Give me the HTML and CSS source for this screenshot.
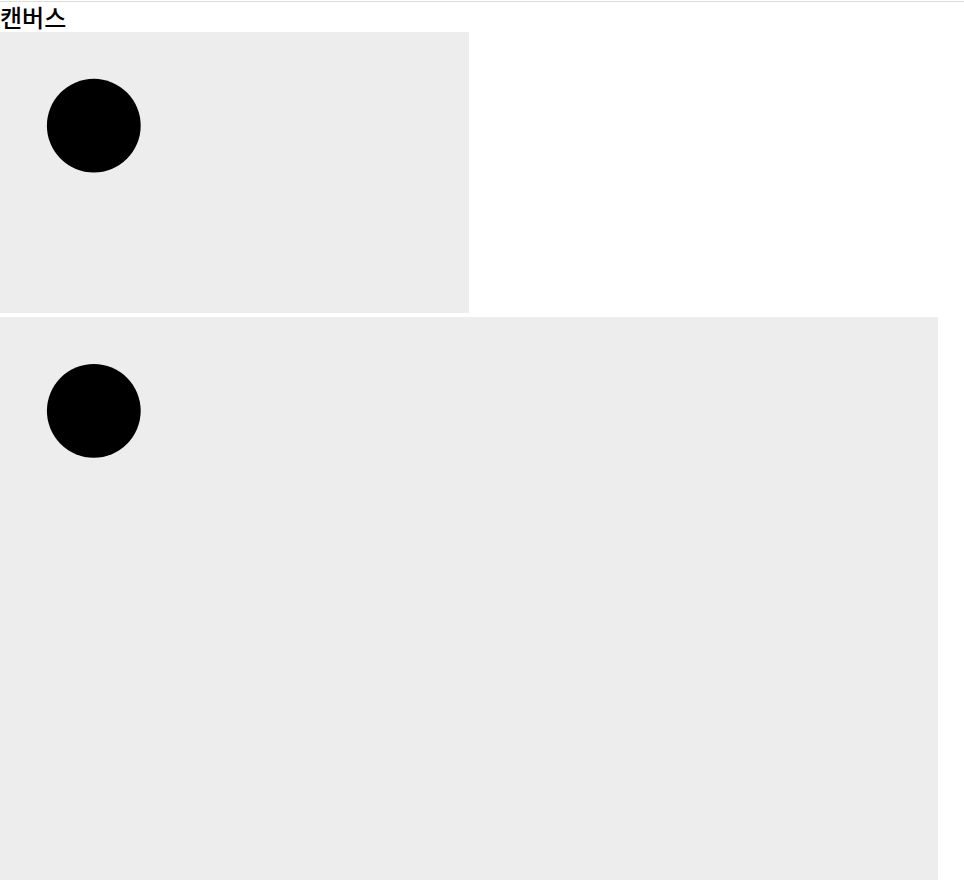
FILE: index.html
```html
<!DOCTYPE html>
<html lang="ko">
<head>
<meta charset="utf-8">
<title>캔버스</title>
<link rel="stylesheet" href="styles.css">
</head>
<body>
<div class="topline"></div>
<h1 class="title">캔버스</h1>
<svg class="canvas small" width="469" height="281" viewBox="0 0 500 300" preserveAspectRatio="none">
  <circle cx="100" cy="100" r="50" fill="#000"/>
</svg>
<svg class="canvas large" width="938" height="563" viewBox="0 0 1000 600" preserveAspectRatio="none">
  <circle cx="100" cy="100" r="50" fill="#000"/>
</svg>
</body>
</html>
```
FILE: styles.css
```css
html, body {
  margin: 0;
  padding: 0;
  background: #fff;
}
.topline {
  margin-top: 1px;
  height: 1px;
  background: #dcdcdc;
}
.title {
  margin: 0;
  height: 30px;
  line-height: 30px;
  font-family: "Noto Sans CJK KR", "Noto Sans", sans-serif;
  font-size: 24px;
  font-weight: 500;
  color: #000;
}
.canvas {
  display: block;
  background: #ededed;
}
.small {
  width: 469px;
  height: 281px;
}
.large {
  margin-top: 4px;
  width: 938px;
  height: 563px;
}
```
